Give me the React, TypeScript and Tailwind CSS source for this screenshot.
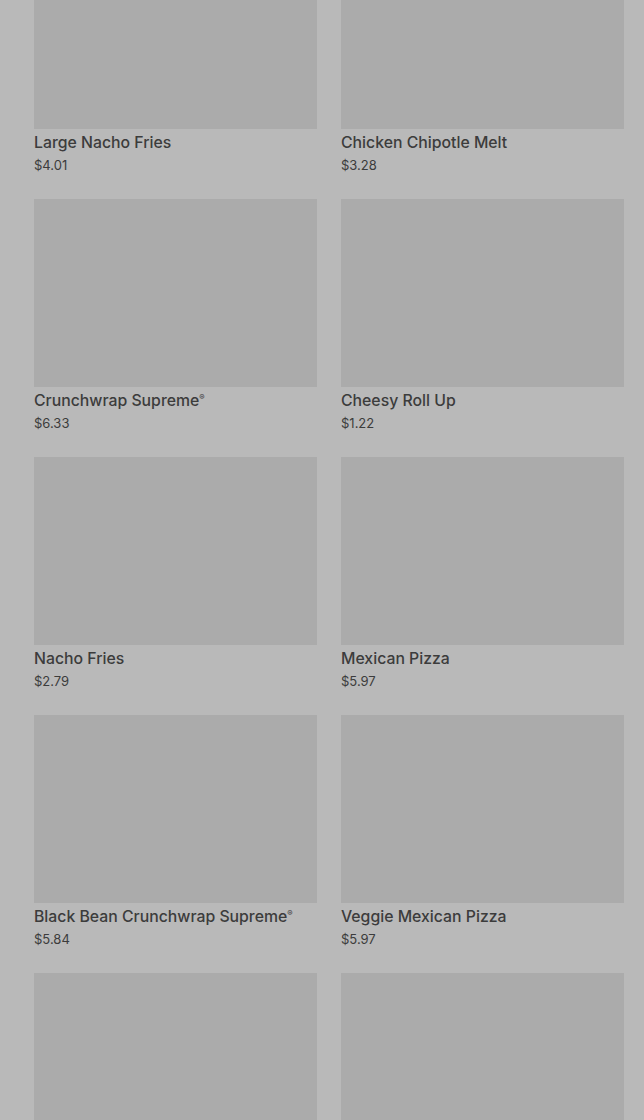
const items = [
  { name: "Large Nacho Fries", price: "$4.01" },
  { name: "Chicken Chipotle Melt", price: "$3.28" },
  { name: "Crunchwrap Supreme®", price: "$6.33" },
  { name: "Cheesy Roll Up", price: "$1.22" },
  { name: "Nacho Fries", price: "$2.79" },
  { name: "Mexican Pizza", price: "$5.97" },
  { name: "Black Bean Crunchwrap Supreme®", price: "$5.84" },
  { name: "Veggie Mexican Pizza", price: "$5.97" },
];

function ProductCard({ name, price }: { name: string; price: string }) {
  return (
    <div className="flex flex-col">
      <div className="h-[188px] w-full bg-[#ababab]" />
      <div className="mt-[4px] h-[20px] text-[15.8px] leading-[20px] font-medium text-[#3c3c3c]">
        {name.endsWith("®") ? (
          <>
            {name.slice(0, -1)}
            <span className="relative -top-[6px] align-baseline text-[8px] leading-none">®</span>
          </>
        ) : (
          name
        )}
      </div>
      <div className="mt-[4px] text-[13px] leading-[16px] text-[#3c3c3c]">{price}</div>
    </div>
  );
}

export default function App() {
  return (
    <div
      className="h-[1120px] w-full overflow-hidden bg-[#b9b9b9]"
      style={{ fontFamily: "Inter, 'Noto Sans', sans-serif" }}
    >
      <div className="-mt-[59px] grid grid-cols-2 gap-x-[24px] gap-y-[26px] pl-[34px] pr-[20px]">
        {items.map((it) => (
          <ProductCard key={it.name} name={it.name} price={it.price} />
        ))}
        {/* next row, only the photos are in view */}
        <div className="h-[188px] w-full bg-[#ababab]" />
        <div className="h-[188px] w-full bg-[#ababab]" />
      </div>
    </div>
  );
}
